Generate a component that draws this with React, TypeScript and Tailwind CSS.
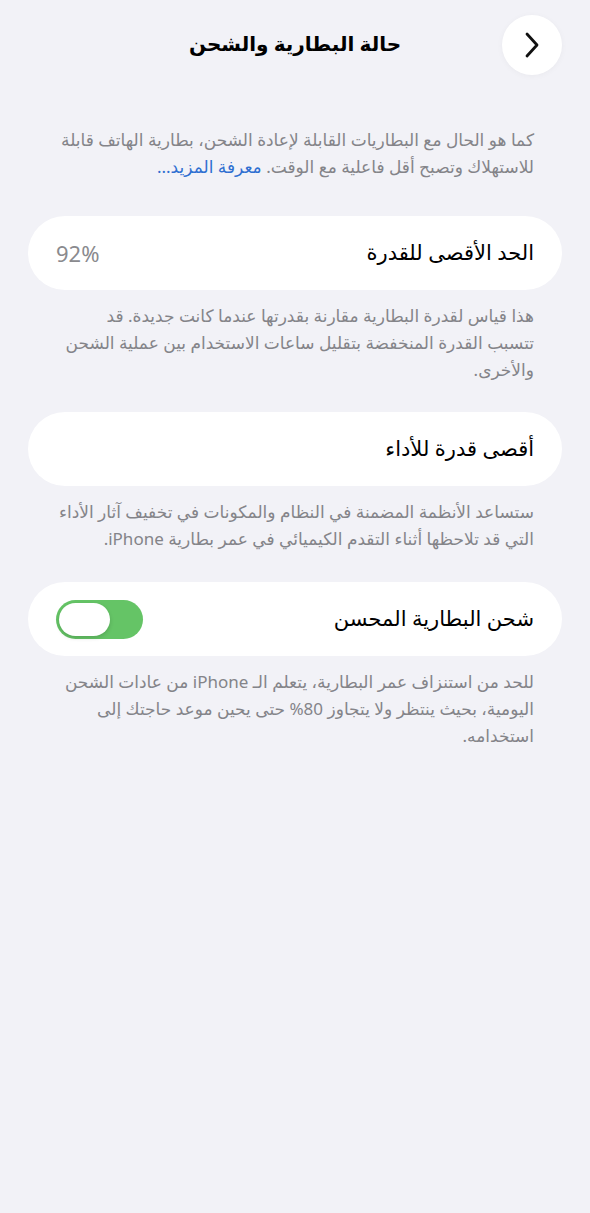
import React, { useState } from 'react';

const font = { fontFamily: '"Noto Sans", "DejaVu Sans", "Noto Sans CJK SC", sans-serif' };

const Card = ({ children }: { children: React.ReactNode }) => (
  <div className="mx-[28px] h-[74px] rounded-full bg-white flex items-center justify-between px-[28px]">
    {children}
  </div>
);

const Note = ({ children }: { children: React.ReactNode }) => (
  <p className="mx-[28px] px-[28px] mt-[12px] text-[17px] leading-[27px] text-[#848489] whitespace-nowrap">{children}</p>
);

export default function App() {
  const [optimized, setOptimized] = useState(true);

  return (
    <div dir="rtl" className="min-h-[1213px] w-full bg-[#f2f2f7] text-black" style={font}>
      <header className="relative h-[90px] flex items-center justify-center">
        <h1 className="text-[20px] font-bold mt-[-2px]">حالة البطارية والشحن</h1>
        <button className="absolute right-[28px] top-[15px] w-[60px] h-[60px] rounded-full bg-white flex items-center justify-center shadow-[0_1px_6px_rgba(0,0,0,0.04)]">
          <svg width="16" height="28" viewBox="0 0 16 28" fill="none">
            <path d="M3 3l10 11L3 25" stroke="#111" strokeWidth="2.8" strokeLinecap="round" strokeLinejoin="round" />
          </svg>
        </button>
      </header>

      <p className="mx-[28px] px-[28px] mt-[36px] text-[17px] leading-[27px] text-[#848489] whitespace-nowrap">
        كما هو الحال مع البطاريات القابلة لإعادة الشحن، بطارية الهاتف قابلة
        <br />
        للاستهلاك وتصبح أقل فاعلية مع الوقت. <span className="text-[#2f6fd1]">معرفة المزيد...</span>
      </p>

      <div className="mt-[36px]">
        <Card>
          <span className="text-[21px]">الحد الأقصى للقدرة</span>
          <span className="text-[22px] text-[#8a8a8e]">92%</span>
        </Card>
        <Note>
          هذا قياس لقدرة البطارية مقارنة بقدرتها عندما كانت جديدة. قد
          <br />
          تتسبب القدرة المنخفضة بتقليل ساعات الاستخدام بين عملية الشحن
          <br />
          والأخرى.
        </Note>
      </div>

      <div className="mt-[29px]">
        <Card>
          <span className="text-[21px]">أقصى قدرة للأداء</span>
        </Card>
        <Note>
          ستساعد الأنظمة المضمنة في النظام والمكونات في تخفيف آثار الأداء
          <br />
          التي قد تلاحظها أثناء التقدم الكيميائي في عمر بطارية iPhone.
        </Note>
      </div>

      <div className="mt-[30px]">
        <Card>
          <span className="text-[21px]">شحن البطارية المحسن</span>
          <button
            onClick={() => setOptimized(!optimized)}
            className={`w-[87px] h-[39px] rounded-full p-[3px] flex ${optimized ? 'bg-[#65c466] justify-end' : 'bg-[#e9e9eb] justify-start'}`}
          >
            <span className="block w-[51px] h-[33px] rounded-full bg-white shadow-[0_2px_4px_rgba(0,0,0,0.15)]" />
          </button>
        </Card>
        <Note>
          للحد من استنزاف عمر البطارية، يتعلم الـ iPhone من عادات الشحن
          <br />
          اليومية، بحيث ينتظر ولا يتجاوز 80% حتى يحين موعد حاجتك إلى
          <br />
          استخدامه.
        </Note>
      </div>
    </div>
  );
}
